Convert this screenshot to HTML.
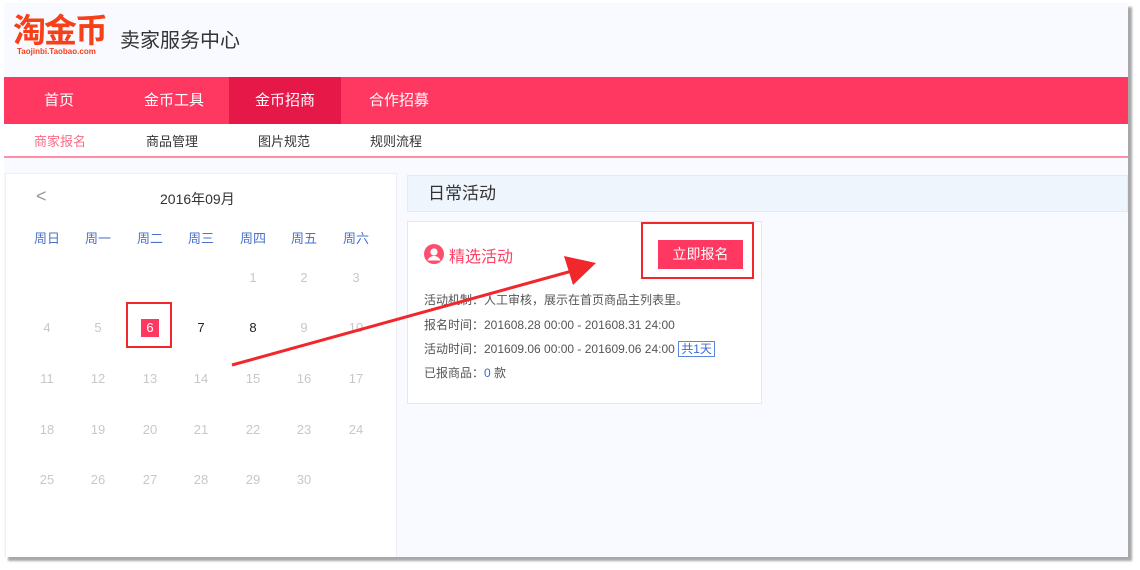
<!DOCTYPE html>
<html><head><meta charset="utf-8"><style>
*{margin:0;padding:0;box-sizing:border-box}
body{width:1140px;height:570px;background:#fff;position:relative;overflow:hidden;font-family:"Liberation Sans","Noto Sans CJK SC",sans-serif}
.page{position:absolute;left:4px;top:3px;width:1124px;height:554px;background:#f8faff;box-shadow:4px 4px 2px #a8a8a8;overflow:hidden}
.abs{position:absolute}
.nav{left:0;top:74px;width:1124px;height:47px;background:#ff3861}
.nav span{position:absolute;top:0;height:47px;line-height:47px;color:#fff;font-size:15px;text-align:center}
.sub{left:0;top:121px;width:1124px;height:34px;background:#fff;border-bottom:2px solid #ff8fa5}
.sub span{position:absolute;top:0;line-height:36px;font-size:13px;color:#333}
.cal{left:1px;top:170px;width:392px;height:390px;background:#fff;border:1px solid #eceef2}
.c{position:absolute;width:40px;margin-left:-20px;text-align:center;font-size:13px}
.wd{color:#4a72c8}
.g{color:#c8c8c8}
.card{left:403px;top:218px;width:355px;height:183px;background:#fff;border:1px solid #e6e8ee}
.card p{position:absolute;left:16px;font-size:12px;color:#555}
</style></head><body>
<div class="page">
 <div class="abs" style="left:9px;top:10px;font-size:33px;font-weight:bold;color:#f5401a;letter-spacing:-2px;line-height:36px">淘金币</div>
 <div class="abs" style="left:13px;top:44px;font-size:8px;font-weight:bold;color:#f5401a">Taojinbi.Taobao.com</div>
 <div class="abs" style="left:116px;top:21px;font-size:20px;color:#333">卖家服务中心</div>
 <div class="abs nav">
  <span style="left:30px;width:50px">首页</span>
  <span style="left:130px;width:80px">金币工具</span>
  <span style="left:225px;width:112px;background:#e51848">金币招商</span>
  <span style="left:355px;width:80px">合作招募</span>
 </div>
 <div class="abs sub">
  <span style="left:30px;color:#ff6a85">商家报名</span>
  <span style="left:142px">商品管理</span>
  <span style="left:254px">图片规范</span>
  <span style="left:366px">规则流程</span>
 </div>
 <div class="abs cal"></div>
 <div class="abs" style="left:403px;top:172px;width:721px;height:37px;background:#eef5fd;border:1px solid #e6eaf0;font-size:17px;color:#333;padding-left:20px;line-height:36px">日常活动</div>
 <div class="abs card">
  <svg class="abs" style="left:16px;top:22px" width="20" height="20" viewBox="0 0 20 20"><circle cx="10" cy="10" r="10" fill="#ff4d6d"/><circle cx="10" cy="8" r="3.6" fill="#fff"/><path d="M3.5 16.5c1.5-3.5 4-4.5 6.5-4.5s5 1 6.5 4.5" fill="#fff"/></svg>
  <div class="abs" style="left:41px;top:21px;font-size:16px;color:#ff4166">精选活动</div>
  <div class="abs" style="left:250px;top:18px;width:85px;height:29px;background:#ff3861;color:#fff;font-size:14px;text-align:center;line-height:29px">立即报名</div>
  <p style="top:69px">活动机制：人工审核，展示在首页商品主列表里。</p>
  <p style="top:94px">报名时间：201608.28 00:00 - 201608.31 24:00</p>
  <p style="top:118px">活动时间：201609.06 00:00 - 201609.06 24:00 <span style="border:1px solid #5a86d8;color:#3a6ad0;padding:0 2px">共1天</span></p>
  <p style="top:142px">已报商品：<span style="color:#3a6ad0">0</span> 款</p>
 </div>
</div>
<div class="abs" style="left:36px;top:186px;font-size:18px;color:#999">&lt;</div>
<div class="abs" style="left:160px;top:189px;font-size:14px;color:#333">2016年09月</div>
<div id="cal"></div>
<script>
var xs=[47,98,150,201,253,304,356],wd=["周日","周一","周二","周三","周四","周五","周六"],h="";
wd.forEach(function(w,i){h+='<div class="c wd" style="left:'+xs[i]+'px;top:228px">'+w+'</div>'});
var ys=[270,320,371,422,472];
for(var d=1;d<=30;d++){var idx=d+3,r=Math.floor(idx/7),c=idx%7;
var cls=(d==7||d==8)?'':'g';
if(d==6){h+='<div class="abs" style="left:141px;top:319px;width:18px;height:18px;background:#ff3861;color:#fff;font-size:13px;text-align:center;line-height:18px">6</div>';continue}
h+='<div class="c '+cls+'" style="left:'+xs[c]+'px;top:'+ys[r]+'px;'+((d==7||d==8)?'color:#222':'')+'">'+d+'</div>'}
document.getElementById('cal').innerHTML=h;
</script>
<div class="abs" style="left:126px;top:302px;width:46px;height:46px;border:2px solid #f0282c"></div>
<div class="abs" style="left:641px;top:222px;width:113px;height:57px;border:2px solid #f0282c"></div>
<svg class="abs" style="left:0;top:0" width="1140" height="570"><path d="M232 365L572 271" stroke="#f0282c" stroke-width="3"/><path d="M596 263L564 256L573 285Z" fill="#f0282c"/></svg>
</body></html>
